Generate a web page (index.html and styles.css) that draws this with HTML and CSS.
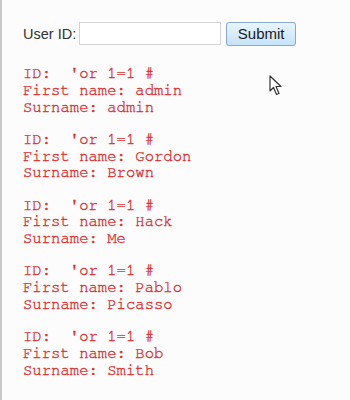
FILE: index.html
```html
<!DOCTYPE html>
<html lang="en">

<head>
    <meta charset="UTF-8">
    <meta name="viewport" content="width=device-width, initial-scale=1.0">
    <title>SQL Injection</title>
    <link rel="stylesheet" href="styles.css">
</head>

<body>
    <div class="page">
        <form class="lookup" action="#" method="GET">
            <label for="id">User ID:</label>
            <input type="text" name="id" id="id">
            <button type="submit">Submit</button>
        </form>

        <pre class="result">ID:  'or 1=1 #
First name: admin
Surname: admin</pre>
        <pre class="result">ID:  'or 1=1 #
First name: Gordon
Surname: Brown</pre>
        <pre class="result">ID:  'or 1=1 #
First name: Hack
Surname: Me</pre>
        <pre class="result">ID:  'or 1=1 #
First name: Pablo
Surname: Picasso</pre>
        <pre class="result">ID:  'or 1=1 #
First name: Bob
Surname: Smith</pre>

        <svg class="cursor" width="14" height="22" viewBox="0 0 14 22">
            <path d="M1 1 L1 16 L4.5 12.5 L7.5 19.5 L10 18.5 L7 11.5 L12 11.5 Z" fill="#fff" stroke="#333" stroke-width="1.2" stroke-linejoin="round"/>
        </svg>
    </div>
</body>

</html>
```

FILE: styles.css
```css
* {
    margin: 0;
    padding: 0;
    box-sizing: border-box;
}

body {
    background: #fcfcfc;
    font-family: "Liberation Sans", Arial, sans-serif;
}

.page {
    position: relative;
    min-height: 400px;
    border-left: 2px solid #c8c8c8;
    padding: 22px 0 0 21px;
}

.lookup {
    display: flex;
    align-items: center;
    height: 23px;
}

.lookup label {
    font-size: 14.5px;
    color: #333;
    margin-right: 3px;
}

.lookup input {
    width: 142px;
    height: 23px;
    border: 1px solid #d4d4d4;
    background: #fff;
    margin-right: 5px;
}

.lookup button {
    width: 70px;
    height: 24px;
    border: 1px solid #86a9cf;
    border-radius: 3px;
    background: linear-gradient(#eaf5fd, #c6e3f8);
    font-family: "Liberation Sans", Arial, sans-serif;
    font-size: 15px;
    color: #1a1a1a;
}

.result {
    font-family: "Nimbus Mono PS", "Nimbus Mono L", FreeMono, Courier, "Liberation Mono", monospace;
    font-size: 15.6px;
    line-height: 16.8px;
    color: #e02c2c;
    -webkit-text-stroke: 0.35px #e02c2c;
}

.lookup + .result {
    margin-top: 21px;
}

.result + .result {
    margin-top: 15.4px;
}

.cursor {
    position: absolute;
    left: 267px;
    top: 75px;
}
```
